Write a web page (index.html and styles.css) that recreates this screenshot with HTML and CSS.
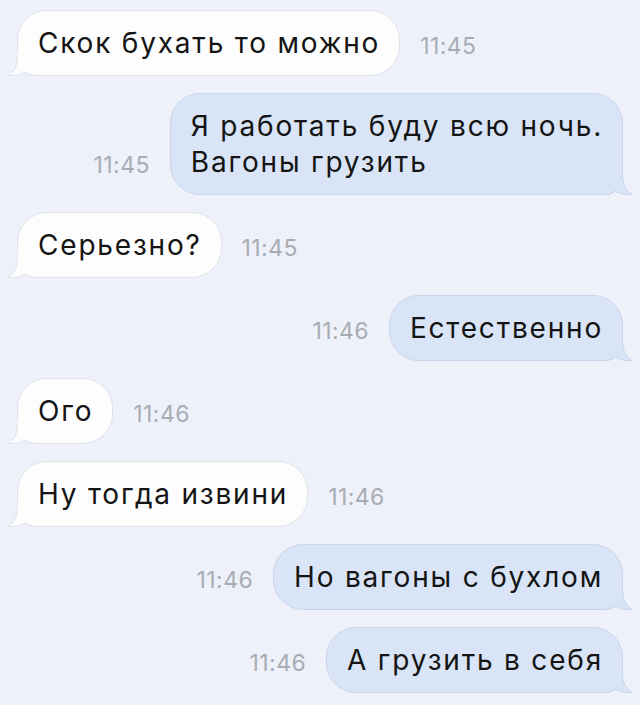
FILE: index.html
```html
<!DOCTYPE html>
<html lang="ru">
<head>
  <meta charset="UTF-8" />
  <meta name="viewport" content="width=device-width, initial-scale=1.0"/>
  <title>Сообщения</title>
  <link rel="stylesheet" href="styles.css">
</head>
<body>
  <main class="chat">
    <div class="row in">
      <div class="bubble">Скок бухать то можно<svg class="tail" viewBox="0 0 30 24"><path class="tail-fill" d="M10.5 0 L10.5 4 C10.5 14 7 20 1 23.5 C8 24 14 22.5 18 20 C21 22.5 25 23.5 30 23.5 L30 0 Z"/><path class="tail-edge" d="M10.5 4 C10.5 14 7 20 1 23.5 C8 24 14 22.5 18 20 C21 22.5 25 23.5 30 23.5"/></svg></div>
      <span class="time">11:45</span>
    </div>
    <div class="row out">
      <span class="time">11:45</span>
      <div class="bubble">Я работать буду всю ночь.<br>Вагоны грузить<svg class="tail" viewBox="0 0 30 24"><path class="tail-fill" d="M10.5 0 L10.5 4 C10.5 14 7 20 1 23.5 C8 24 14 22.5 18 20 C21 22.5 25 23.5 30 23.5 L30 0 Z"/><path class="tail-edge" d="M10.5 4 C10.5 14 7 20 1 23.5 C8 24 14 22.5 18 20 C21 22.5 25 23.5 30 23.5"/></svg></div>
    </div>
    <div class="row in">
      <div class="bubble">Серьезно?<svg class="tail" viewBox="0 0 30 24"><path class="tail-fill" d="M10.5 0 L10.5 4 C10.5 14 7 20 1 23.5 C8 24 14 22.5 18 20 C21 22.5 25 23.5 30 23.5 L30 0 Z"/><path class="tail-edge" d="M10.5 4 C10.5 14 7 20 1 23.5 C8 24 14 22.5 18 20 C21 22.5 25 23.5 30 23.5"/></svg></div>
      <span class="time">11:45</span>
    </div>
    <div class="row out">
      <span class="time">11:46</span>
      <div class="bubble">Естественно<svg class="tail" viewBox="0 0 30 24"><path class="tail-fill" d="M10.5 0 L10.5 4 C10.5 14 7 20 1 23.5 C8 24 14 22.5 18 20 C21 22.5 25 23.5 30 23.5 L30 0 Z"/><path class="tail-edge" d="M10.5 4 C10.5 14 7 20 1 23.5 C8 24 14 22.5 18 20 C21 22.5 25 23.5 30 23.5"/></svg></div>
    </div>
    <div class="row in">
      <div class="bubble">Ого<svg class="tail" viewBox="0 0 30 24"><path class="tail-fill" d="M10.5 0 L10.5 4 C10.5 14 7 20 1 23.5 C8 24 14 22.5 18 20 C21 22.5 25 23.5 30 23.5 L30 0 Z"/><path class="tail-edge" d="M10.5 4 C10.5 14 7 20 1 23.5 C8 24 14 22.5 18 20 C21 22.5 25 23.5 30 23.5"/></svg></div>
      <span class="time">11:46</span>
    </div>
    <div class="row in">
      <div class="bubble">Ну тогда извини<svg class="tail" viewBox="0 0 30 24"><path class="tail-fill" d="M10.5 0 L10.5 4 C10.5 14 7 20 1 23.5 C8 24 14 22.5 18 20 C21 22.5 25 23.5 30 23.5 L30 0 Z"/><path class="tail-edge" d="M10.5 4 C10.5 14 7 20 1 23.5 C8 24 14 22.5 18 20 C21 22.5 25 23.5 30 23.5"/></svg></div>
      <span class="time">11:46</span>
    </div>
    <div class="row out">
      <span class="time">11:46</span>
      <div class="bubble">Но вагоны с бухлом<svg class="tail" viewBox="0 0 30 24"><path class="tail-fill" d="M10.5 0 L10.5 4 C10.5 14 7 20 1 23.5 C8 24 14 22.5 18 20 C21 22.5 25 23.5 30 23.5 L30 0 Z"/><path class="tail-edge" d="M10.5 4 C10.5 14 7 20 1 23.5 C8 24 14 22.5 18 20 C21 22.5 25 23.5 30 23.5"/></svg></div>
    </div>
    <div class="row out">
      <span class="time">11:46</span>
      <div class="bubble">А грузить в себя<svg class="tail" viewBox="0 0 30 24"><path class="tail-fill" d="M10.5 0 L10.5 4 C10.5 14 7 20 1 23.5 C8 24 14 22.5 18 20 C21 22.5 25 23.5 30 23.5 L30 0 Z"/><path class="tail-edge" d="M10.5 4 C10.5 14 7 20 1 23.5 C8 24 14 22.5 18 20 C21 22.5 25 23.5 30 23.5"/></svg></div>
    </div>
  </main>
</body>
</html>
```

FILE: styles.css
```css
html, body {
  margin: 0;
  padding: 0;
  background: #eef1fa;
  font-family: Inter, "Liberation Sans", sans-serif;
}
.chat {
  display: flex;
  flex-direction: column;
  gap: 17px;
  padding: 10px 17px 0 17px;
}
.row {
  display: flex;
  align-items: flex-end;
  gap: 20px;
}
.row.out {
  justify-content: flex-end;
}
.bubble {
  position: relative;
  padding: 14px 19px 14px 20px;
  font-size: 28px;
  line-height: 36px;
  letter-spacing: 1.8px;
  color: #141414;
  border-radius: 30px;
  border-bottom-left-radius: 18px;
  background: #fdfdfe;
  border: 1px solid #dfe2ea;
}
.row.out .bubble {
  background: #d9e4f6;
  border-color: #c8d5ea;
  border-bottom-left-radius: 30px;
  border-bottom-right-radius: 18px;
}
.tail {
  position: absolute;
  left: -11px;
  bottom: -1px;
  width: 30px;
  height: 24px;
  overflow: visible;
}
.row.out .tail {
  left: auto;
  right: -11px;
  transform: scaleX(-1);
}
.tail-fill {
  fill: #fdfdfe;
}
.tail-edge {
  fill: none;
  stroke: #dfe2ea;
  stroke-width: 1;
}
.row.out .tail-fill {
  fill: #d9e4f6;
}
.row.out .tail-edge {
  stroke: #c8d5ea;
}
.time {
  font-size: 23px;
  line-height: 23px;
  letter-spacing: 0.4px;
  margin-bottom: 18px;
  color: #a9acb3;
}
```
